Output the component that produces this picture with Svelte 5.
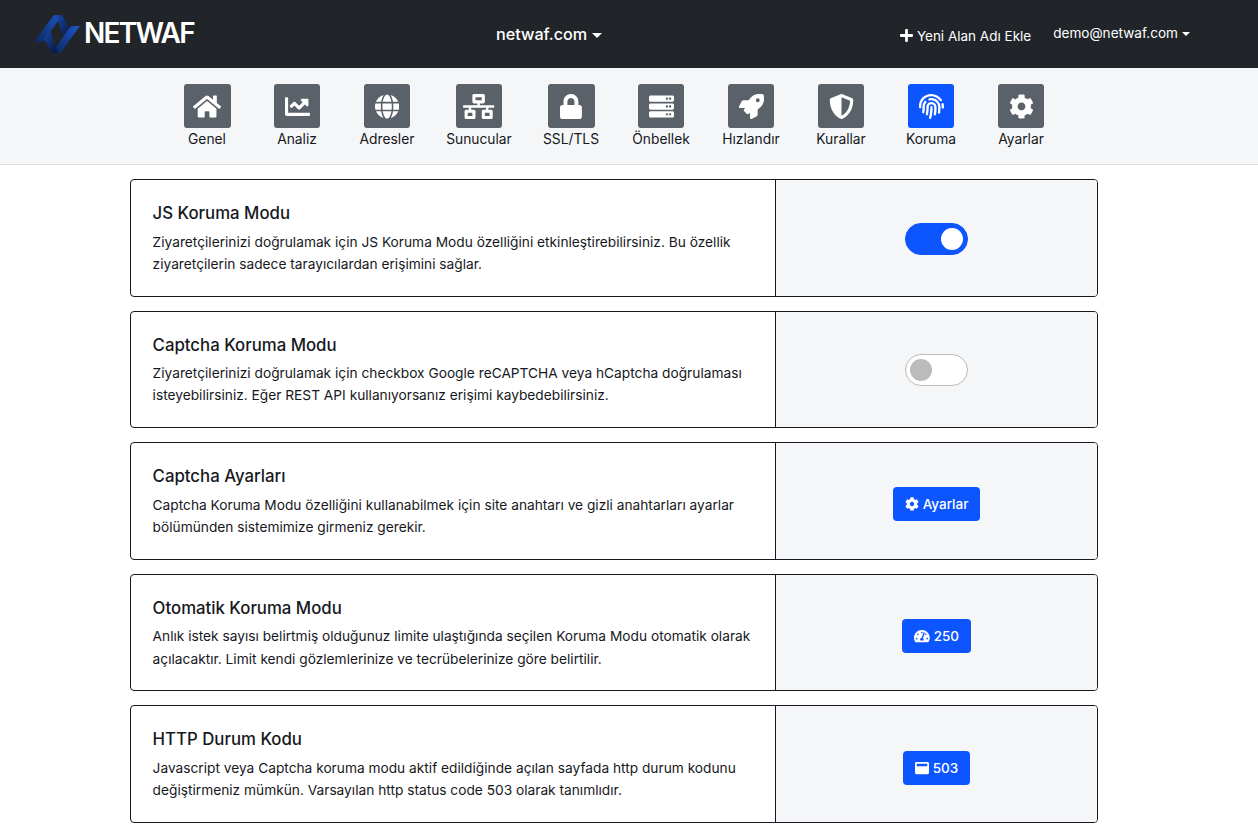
<script lang="ts">
	// Icon paths, Font Awesome style solid glyphs
	const icons = {
		home: { box: '0 0 576 512', d: 'M280.37 148.26L96 300.11V464a16 16 0 0 0 16 16l112.06-.29a16 16 0 0 0 15.92-16V368a16 16 0 0 1 16-16h64a16 16 0 0 1 16 16v95.64a16 16 0 0 0 16 16.05L464 480a16 16 0 0 0 16-16V300L295.67 148.26a12.19 12.19 0 0 0-15.3 0zM571.6 251.47L488 182.56V44.05a12 12 0 0 0-12-12h-56a12 12 0 0 0-12 12v72.61L318.47 43a48 48 0 0 0-61 0L4.34 251.47a12 12 0 0 0-1.6 16.9l25.5 31A12 12 0 0 0 45.15 301l235.22-193.74a12.19 12.19 0 0 1 15.3 0L530.9 301a12 12 0 0 0 16.9-1.6l25.5-31a12 12 0 0 0-1.7-16.93z' },
		chart: { box: '0 0 512 512', d: 'M496 384H64V80c0-8.84-7.16-16-16-16H16C7.16 64 0 71.16 0 80v336c0 17.67 14.33 32 32 32h464c8.84 0 16-7.16 16-16v-32c0-8.84-7.16-16-16-16zM464 96H345.94c-21.38 0-32.09 25.85-16.97 40.97l32.4 32.4L288 242.75l-73.37-73.37c-12.5-12.5-32.76-12.5-45.25 0l-68.69 68.69c-6.25 6.25-6.25 16.38 0 22.63l22.62 22.62c6.25 6.25 16.38 6.25 22.63 0L192 237.25l73.37 73.37c12.5 12.5 32.76 12.5 45.25 0l96-96 32.4 32.4c15.12 15.12 40.97 4.41 40.97-16.97V112c.01-8.84-7.15-16-15.99-16z' },
		globe: { box: '0 0 496 512', d: 'M336.5 160C322 70.7 287.8 8 248 8s-74 62.7-88.5 152h177zM152 256c0 22.2 1.2 43.5 3.3 64h185.3c2.1-20.5 3.3-41.8 3.3-64s-1.2-43.5-3.3-64H155.3c-2.1 20.5-3.3 41.8-3.3 64zm324.7-96c-28.6-67.9-86.5-120.4-158-141.6 24.4 33.8 41.2 84.7 50 141.6h108zM177.2 18.4C105.8 39.6 47.8 92.1 19.3 160h108c8.7-56.9 25.5-107.8 49.9-141.6zM487.4 192H372.7c2.1 21 3.3 42.5 3.3 64s-1.2 43-3.3 64h114.6c5.5-20.5 8.6-41.8 8.6-64s-3.1-43.5-8.5-64zM120 256c0-21.5 1.2-43 3.3-64H8.6C3.2 212.5 0 233.8 0 256s3.2 43.5 8.6 64h114.6c-2-21-3.2-42.5-3.2-64zm39.5 96c14.5 89.3 48.7 152 88.5 152s74-62.7 88.5-152h-177zm159.3 141.6c71.4-21.2 129.4-73.7 158-141.6h-108c-8.8 56.9-25.6 107.8-50 141.6zM19.3 352c28.6 67.9 86.5 120.4 158 141.6-24.4-33.8-41.2-84.7-50-141.6h-108z' },
		network: { box: '0 0 640 512', d: 'M640 264v-16c0-8.84-7.16-16-16-16H344v-40h72c17.67 0 32-14.33 32-32V32c0-17.67-14.33-32-32-32H224c-17.67 0-32 14.33-32 32v128c0 17.67 14.33 32 32 32h72v40H16c-8.84 0-16 7.16-16 16v16c0 8.84 7.16 16 16 16h104v40H64c-17.67 0-32 14.33-32 32v128c0 17.67 14.33 32 32 32h160c17.67 0 32-14.33 32-32V352c0-17.67-14.33-32-32-32h-56v-40h304v40h-56c-17.67 0-32 14.33-32 32v128c0 17.67 14.33 32 32 32h160c17.67 0 32-14.33 32-32V352c0-17.67-14.33-32-32-32h-56v-40h104c8.84 0 16-7.16 16-16zM256 128V64h128v64H256zm-64 320H96v-64h96v64zm352 0h-96v-64h96v64z' },
		lock: { box: '0 0 448 512', d: 'M400 224h-24v-72C376 68.2 307.8 0 224 0S72 68.2 72 152v72H48c-26.5 0-48 21.5-48 48v192c0 26.5 21.5 48 48 48h352c26.5 0 48-21.5 48-48V272c0-26.5-21.5-48-48-48zm-104 0H152v-72c0-39.7 32.3-72 72-72s72 32.3 72 72v72z' },
		server: { box: '0 0 512 512', d: 'M480 160H32c-17.673 0-32-14.327-32-32V64c0-17.673 14.327-32 32-32h448c17.673 0 32 14.327 32 32v64c0 17.673-14.327 32-32 32zm-48-88c-13.255 0-24 10.745-24 24s10.745 24 24 24 24-10.745 24-24-10.745-24-24-24zm-64 0c-13.255 0-24 10.745-24 24s10.745 24 24 24 24-10.745 24-24-10.745-24-24-24zm112 248H32c-17.673 0-32-14.327-32-32v-64c0-17.673 14.327-32 32-32h448c17.673 0 32 14.327 32 32v64c0 17.673-14.327 32-32 32zm-48-88c-13.255 0-24 10.745-24 24s10.745 24 24 24 24-10.745 24-24-10.745-24-24-24zm-64 0c-13.255 0-24 10.745-24 24s10.745 24 24 24 24-10.745 24-24-10.745-24-24-24zm112 248H32c-17.673 0-32-14.327-32-32v-64c0-17.673 14.327-32 32-32h448c17.673 0 32 14.327 32 32v64c0 17.673-14.327 32-32 32zm-48-88c-13.255 0-24 10.745-24 24s10.745 24 24 24 24-10.745 24-24-10.745-24-24-24zm-64 0c-13.255 0-24 10.745-24 24s10.745 24 24 24 24-10.745 24-24-10.745-24-24-24z' },
		rocket: { box: '0 0 512 512', d: 'M505.12019,19.09375c-1.18945-5.53125-6.65819-11-12.207-12.1875C460.716,0,435.507,0,410.40747,0,307.17523,0,245.26909,55.20312,199.05238,128H94.83772c-16.34763.01562-35.55658,11.875-42.88664,26.48438L2.51562,253.29688A28.4,28.4,0,0,0,0,264a24.00867,24.00867,0,0,0,24.00582,24H127.81618l-22.47457,22.46875c-11.36521,11.36133-12.99607,32.25781,0,45.25L156.24582,406.625c11.15623,11.1875,32.15619,13.15625,45.27726,0l22.47457-22.46875V488a24.00867,24.00867,0,0,0,24.00581,24,28.55934,28.55934,0,0,0,10.707-2.51562l98.72834-49.39063c14.62888-7.29687,26.50776-26.5,26.50776-42.85937V312.79688c72.59753-46.3125,128.03493-108.40626,128.03493-211.09376C512.07526,76.5,512.07526,51.29688,505.12019,19.09375ZM384.04033,168A40,40,0,1,1,424.05,128,40.02322,40.02322,0,0,1,384.04033,168Z' },
		shield: { box: '0 0 512 512', d: 'M466.5 83.7l-192-80a48.15 48.15 0 0 0-36.9 0l-192 80C27.7 91.1 16 108.6 16 128c0 198.5 114.5 335.7 221.5 380.3 11.8 4.9 25.1 4.9 36.9 0C360.1 472.6 496 349.3 496 128c0-19.4-11.7-36.9-29.5-44.3zM256.1 446.3l-.1-381 175.9 73.3c-3.3 151.4-82.1 261.1-175.8 307.7z' },
		fingerprint: { box: '0 0 512 512', d: 'M256.12 245.96c-13.25 0-24 10.74-24 24 1.14 72.25-8.14 141.9-27.7 211.55-2.73 9.72 2.15 30.49 23.12 30.49 10.48 0 20.11-6.92 23.09-17.52 13.53-47.91 31.04-125.41 29.48-224.52.01-13.25-10.73-24-23.99-24zm-.86-81.73C194 164.16 151.25 211.3 152.1 265.32c.75 47.94-3.75 95.91-13.37 142.55-2.69 12.98 5.67 25.69 18.64 28.36 13.05 2.67 25.67-5.66 28.36-18.64 10.34-50.09 15.17-101.58 14.37-153.02-.41-25.95 19.92-52.49 54.45-52.34 31.31.47 57.15 25.34 57.62 55.47.77 48.05-2.81 96.33-10.61 143.55-2.17 13.06 6.69 25.42 19.76 27.58 19.97 3.33 26.81-15.1 27.58-19.77 8.28-50.03 12.06-101.21 11.27-152.11-.88-55.8-47.94-101.88-104.91-102.72zm-110.69-19.78c-10.3-8.34-25.37-6.8-33.76 3.48-25.62 31.5-39.39 71.28-38.75 112 .59 37.58-2.47 75.27-9.11 112.05-2.34 13.05 6.31 25.53 19.36 27.89 20.11 3.5 27.07-14.81 27.89-19.36 7.19-39.84 10.5-80.66 9.86-121.33-.47-29.88 9.2-57.88 28-80.97 8.35-10.28 6.79-25.39-3.49-33.76zm109.47-62.33c-15.41-.41-30.87 1.44-45.78 4.97-12.89 3.06-20.87 15.98-17.83 28.89 3.06 12.89 16 20.83 28.89 17.83 11.05-2.61 22.47-3.77 34-3.69 75.43 1.13 137.73 61.5 138.88 134.58.59 37.88-1.28 76.11-5.58 113.63-1.5 13.17 7.95 25.08 21.11 26.58 16.72 1.95 25.51-11.88 26.58-21.11a929.06 929.06 0 0 0 5.89-119.85c-1.56-98.75-85.07-180.33-186.16-181.83zm252.07 121.45c-2.86-12.92-15.51-21.2-28.61-18.27-12.94 2.86-21.12 15.66-18.26 28.61 4.71 21.41 4.91 37.41 4.7 61.6-.11 13.27 10.55 24.09 23.8 24.2h.2c13.17 0 23.89-10.61 24-23.8.18-22.18.4-44.11-5.83-72.34zm-40.12-90.72C417.29 43.46 337.6 1.29 252.81.02 183.02-.82 118.47 24.91 70.46 72.94 24.09 119.37-.9 181.04.14 246.65l-.12 21.47c-.39 13.25 10.03 24.31 23.28 24.69.23.02.48.02.72.02 12.92 0 23.59-10.3 23.97-23.3l.16-23.64c-.83-52.5 19.16-101.86 56.28-139 38.76-38.8 91.34-59.67 147.68-58.86 69.45 1.03 134.73 35.56 174.62 92.39 7.61 10.86 22.56 13.45 33.42 5.86 10.84-7.62 13.46-22.59 5.84-33.43z' },
		cog: { box: '0 0 512 512', d: 'M487.4 315.7l-42.6-24.6c4.3-23.2 4.3-47 0-70.2l42.6-24.6c4.9-2.8 7.1-8.6 5.5-14-11.1-35.6-30-67.8-54.7-94.6-3.8-4.1-10-5.1-14.8-2.3L380.8 110c-17.9-15.4-38.5-27.3-60.8-35.1V25.8c0-5.6-3.9-10.5-9.4-11.7-36.7-8.2-74.3-7.8-109.2 0-5.5 1.2-9.4 6.1-9.4 11.7V75c-22.2 7.9-42.8 19.8-60.8 35.1L88.7 85.5c-4.9-2.8-11-1.9-14.8 2.3-24.7 26.7-43.6 58.9-54.7 94.6-1.7 5.4.6 11.2 5.5 14L67.3 221c-4.3 23.2-4.3 47 0 70.2l-42.6 24.6c-4.9 2.8-7.1 8.6-5.5 14 11.1 35.6 30 67.8 54.7 94.6 3.8 4.1 10 5.1 14.8 2.3l42.6-24.6c17.9 15.4 38.5 27.3 60.8 35.1v49.2c0 5.6 3.9 10.5 9.4 11.7 36.7 8.2 74.3 7.8 109.2 0 5.5-1.2 9.4-6.1 9.4-11.7v-49.2c22.2-7.9 42.8-19.8 60.8-35.1l42.6 24.6c4.9 2.8 11 1.9 14.8-2.3 24.7-26.7 43.6-58.9 54.7-94.6 1.5-5.5-.7-11.3-5.6-14.1zM256 336c-44.1 0-80-35.9-80-80s35.9-80 80-80 80 35.9 80 80-35.9 80-80 80z' },
		gauge: { box: '0 0 576 512', d: 'M288 32C128.94 32 0 160.94 0 320c0 52.8 14.25 102.26 39.06 144.8 5.61 9.62 16.3 15.2 27.44 15.2h443c11.14 0 21.83-5.58 27.44-15.2C561.75 422.26 576 372.8 576 320c0-159.06-128.94-288-288-288zm0 64c14.71 0 26.58 10.13 30.32 23.65-1.11 2.26-2.64 4.23-3.45 6.67l-9.22 27.67c-5.13 3.49-10.97 6.01-17.64 6.01-17.67 0-32-14.33-32-32S270.33 96 288 96zM96 384c-17.67 0-32-14.33-32-32s14.33-32 32-32 32 14.33 32 32-14.33 32-32 32zm48-160c-17.67 0-32-14.33-32-32s14.33-32 32-32 32 14.33 32 32-14.33 32-32 32zm246.77-72.41l-61.33 184C343.13 347.33 352 364.54 352 384c0 11.72-3.38 22.55-8.88 32H232.88c-5.5-9.45-8.88-20.28-8.88-32 0-33.94 26.5-61.43 59.9-63.59l61.34-184.01c4.17-12.56 17.73-19.45 30.36-15.17 12.57 4.19 19.35 17.79 15.17 30.36zm14.66 57.2l15.52-46.55c3.47-1.29 7.13-2.23 11.05-2.23 17.67 0 32 14.33 32 32s-14.33 32-32 32c-11.38-.01-20.89-6.27-26.57-15.22zM480 384c-17.67 0-32-14.33-32-32s14.33-32 32-32 32 14.33 32 32-14.33 32-32 32z' },
		window: { box: '0 0 512 512', d: 'M464 32H48C21.5 32 0 53.5 0 80v352c0 26.5 21.5 48 48 48h416c26.5 0 48-21.5 48-48V80c0-26.5-21.5-48-48-48zm-16 160H64v-84c0-6.6 5.4-12 12-12h360c6.6 0 12 5.4 12 12v84z' },
		plus: { box: '0 0 448 512', d: 'M416 208H272V64c0-17.67-14.33-32-32-32h-32c-17.67 0-32 14.33-32 32v144H32c-17.67 0-32 14.33-32 32v32c0 17.67 14.33 32 32 32h144v144c0 17.67 14.33 32 32 32h32c17.67 0 32-14.33 32-32V304h144c17.67 0 32-14.33 32-32v-32c0-17.67-14.33-32-32-32z' }
	};

	const menu = [
		{ label: 'Genel', icon: icons.home, wide: true },
		{ label: 'Analiz', icon: icons.chart },
		{ label: 'Adresler', icon: icons.globe },
		{ label: 'Sunucular', icon: icons.network },
		{ label: 'SSL/TLS', icon: icons.lock, wide: true },
		{ label: 'Önbellek', icon: icons.server },
		{ label: 'Hızlandır', icon: icons.rocket },
		{ label: 'Kurallar', icon: icons.shield },
		{ label: 'Koruma', icon: icons.fingerprint, active: true },
		{ label: 'Ayarlar', icon: icons.cog }
	];

	const settings = [
		{
			title: 'JS Koruma Modu',
			text: 'Ziyaretçilerinizi doğrulamak için JS Koruma Modu özelliğini etkinleştirebilirsiniz. Bu özellik ziyaretçilerin sadece tarayıcılardan erişimini sağlar.',
			kind: 'toggle',
			on: true
		},
		{
			title: 'Captcha Koruma Modu',
			text: 'Ziyaretçilerinizi doğrulamak için checkbox Google reCAPTCHA veya hCaptcha doğrulaması isteyebilirsiniz. Eğer REST API kullanıyorsanız erişimi kaybedebilirsiniz.',
			kind: 'toggle',
			on: false
		},
		{
			title: 'Captcha Ayarları',
			text: 'Captcha Koruma Modu özelliğini kullanabilmek için site anahtarı ve gizli anahtarları ayarlar bölümünden sistemimize girmeniz gerekir.',
			kind: 'button',
			icon: icons.cog,
			value: 'Ayarlar'
		},
		{
			title: 'Otomatik Koruma Modu',
			text: 'Anlık istek sayısı belirtmiş olduğunuz limite ulaştığında seçilen Koruma Modu otomatik olarak açılacaktır. Limit kendi gözlemlerinize ve tecrübelerinize göre belirtilir.',
			kind: 'button',
			icon: icons.gauge,
			value: '250'
		},
		{
			title: 'HTTP Durum Kodu',
			text: 'Javascript veya Captcha koruma modu aktif edildiğinde açılan sayfada http durum kodunu değiştirmeniz mümkün. Varsayılan http status code 503 olarak tanımlıdır.',
			kind: 'button',
			icon: icons.window,
			value: '503'
		}
	];
</script>

<header class="topbar">
	<a class="brand" href="#top">
		<svg class="brand-mark" viewBox="0 0 46 38" aria-hidden="true">
			<defs>
				<linearGradient id="rise" x1="0" y1="1" x2="1" y2="0">
					<stop offset="0" stop-color="#0c2560" />
					<stop offset="1" stop-color="#1d56c4" />
				</linearGradient>
				<linearGradient id="fall" x1="0" y1="0" x2="1" y2="1">
					<stop offset="0" stop-color="#1a48a6" />
					<stop offset="1" stop-color="#081539" />
				</linearGradient>
			</defs>
			<path d="M0 27 L19 1 Q20 0 22 0 H28 L10 26 Q9 27 7 27 Z" fill="url(#rise)" />
			<path d="M22 0 H28 L36 14 L30 24 Z" fill="url(#fall)" />
			<path d="M46 11 L27 37 Q26 38 24 38 H18 L36 12 Q37 11 39 11 Z" fill="url(#rise)" />
			<path d="M24 38 H18 L10 24 L16 14 Z" fill="url(#fall)" />
		</svg>
		<span class="brand-name">NETWAF</span>
	</a>
	<button class="domain" type="button">netwaf.com<span class="caret big"></span></button>
	<div class="top-actions">
		<a class="add" href="#top">
			<svg viewBox={icons.plus.box} aria-hidden="true"><path d={icons.plus.d} /></svg>
			Yeni Alan Adı Ekle
		</a>
		<button class="account" type="button">demo@netwaf.com<span class="caret"></span></button>
	</div>
</header>

<nav class="menu">
	{#each menu as item}
		<a class="menu-item" href="#top">
			<span class="tile" class:active={item.active} class:wide={item.wide}>
				<svg viewBox={item.icon.box} aria-hidden="true"><path d={item.icon.d} /></svg>
			</span>
			<span class="menu-label">{item.label}</span>
		</a>
	{/each}
</nav>

<main class="list">
	{#each settings as row}
		<section class="row">
			<div class="info">
				<h2>{row.title}</h2>
				<p>{row.text}</p>
			</div>
			<div class="control">
				{#if row.kind === 'toggle'}
					<span class="switch" class:on={row.on}><span class="knob"></span></span>
				{:else}
					<button class="action" type="button">
						<svg viewBox={row.icon.box} aria-hidden="true"><path d={row.icon.d} /></svg>
						{row.value}
					</button>
				{/if}
			</div>
		</section>
	{/each}
</main>

<style>
	:global(body) {
		background: #fff;
		font-family: Inter, 'Liberation Sans', sans-serif;
		color: #16181d;
	}

	a {
		color: inherit;
		text-decoration: none;
	}

	button {
		font-family: inherit;
		border: none;
		background: none;
		color: inherit;
		cursor: pointer;
		padding: 0;
	}

	/* Top bar */
	.topbar {
		height: 68px;
		background: #212529;
		color: #fff;
		display: grid;
		grid-template-columns: 496px 1fr auto;
		align-items: center;
		padding-right: 68px;
		box-sizing: border-box;
	}

	.brand {
		display: flex;
		align-items: center;
		padding-left: 34px;
		gap: 4px;
	}

	.brand-mark {
		width: 46px;
		height: 38px;
	}

	.brand-name {
		font-weight: 600;
		font-size: 28px;
		line-height: 1;
		letter-spacing: -1.7px;
		margin-top: -3px;
	}

	.domain {
		justify-self: start;
		font-size: 16.2px;
		font-weight: 500;
	}

	.caret {
		display: inline-block;
		margin-left: 4px;
		vertical-align: 2px;
		border-top: 4px solid #fff;
		border-left: 4px solid transparent;
		border-right: 4px solid transparent;
	}

	.caret.big {
		margin-left: 5px;
		border-top-width: 5px;
		border-left-width: 5.5px;
		border-right-width: 5.5px;
		vertical-align: 2px;
	}

	.top-actions {
		display: flex;
		align-items: center;
		gap: 22px;
		font-size: 13.5px;
	}

	.add {
		display: flex;
		align-items: center;
		gap: 4px;
		margin-top: 3px;
	}

	.add svg {
		width: 13px;
		height: 15px;
		fill: #fff;
	}

	.account {
		font-size: 13.6px;
		margin-top: -3px;
	}

	/* Icon menu */
	.menu {
		height: 97px;
		box-sizing: border-box;
		background: #f5f6f8;
		border-bottom: 1px solid #ddd;
		display: flex;
		padding: 16px 0 0 162px;
	}

	.menu-item {
		width: 90px;
		display: flex;
		flex-direction: column;
		align-items: center;
		flex-shrink: 0;
	}

	.menu-item:nth-child(4) {
		width: 94px;
	}

	.tile {
		width: 46px;
		height: 44px;
		background: #5a6169;
		border-radius: 3px;
		display: flex;
		align-items: center;
		justify-content: center;
	}

	.tile.wide {
		width: 47px;
	}

	.tile.active {
		background: #0d55ff;
	}

	.tile svg {
		height: 25px;
		max-width: 32px;
		fill: #fff;
	}

	.menu-label {
		font-size: 13.8px;
		line-height: 18px;
		margin-top: 2px;
		white-space: nowrap;
	}

	/* Settings rows */
	.list {
		width: 968px;
		margin: 14px 0 0 130px;
		display: flex;
		flex-direction: column;
		gap: 14.1px;
	}

	.row {
		display: grid;
		grid-template-columns: 645px 1fr;
		height: 117.5px;
		box-sizing: border-box;
		border: 1px solid #16181d;
		border-radius: 4px;
		overflow: hidden;
	}

	.info {
		border-right: 1px solid #16181d;
		padding: 22px 20px 0 21.6px;
	}

	h2 {
		margin: 0 0 6.6px;
		font-size: 16.8px;
		font-weight: 500;
		line-height: 22px;
	}

	p {
		margin: 0;
		font-size: 13.72px;
		line-height: 22.2px;
	}

	.control {
		background: #f5f6f8;
		display: flex;
		align-items: center;
		justify-content: center;
	}

	.switch {
		width: 63px;
		height: 32px;
		margin-top: 2px;
		box-sizing: border-box;
		border: 1px solid #bbb;
		border-radius: 16px;
		background: #fff;
		display: flex;
		align-items: center;
		padding: 0 4px;
	}

	.knob {
		width: 22px;
		height: 22px;
		border-radius: 50%;
		background: #bbb;
	}

	.switch.on {
		background: #0d55ff;
		border-color: #0d55ff;
		justify-content: flex-end;
	}

	.switch.on .knob {
		background: #fff;
	}

	.action {
		background: #0d55ff;
		color: #fff;
		border-radius: 4px;
		height: 34px;
		margin-top: 7px;
		padding: 0 12px;
		font-size: 13.5px;
		font-weight: 500;
		display: inline-flex;
		align-items: center;
		gap: 4px;
	}

	.action svg {
		height: 14px;
		width: auto;
		max-width: 16px;
		fill: #fff;
	}
</style>
